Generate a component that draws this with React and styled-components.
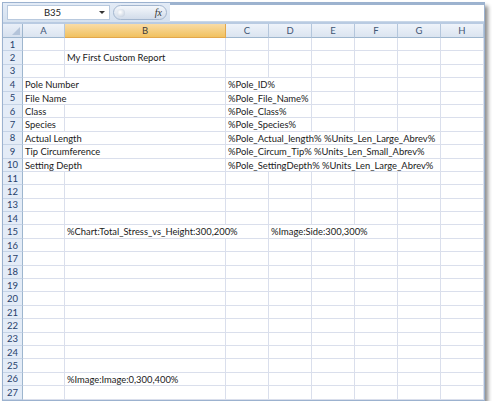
import React from 'react';
import styled, { createGlobalStyle } from 'styled-components';

const GlobalStyle = createGlobalStyle`
  html, body { margin: 0; padding: 0; background: #ffffff; }
  body { font-family: Lato, "Open Sans", sans-serif; }
`;

const Window = styled.div`
  width: 481px;
  margin: 2px 0 0 2px;
  border: 1px solid #9cb2cf;
  background: #ffffff;
  box-shadow: 3px 4px 4px rgba(0, 0, 0, 0.45);
  display: flex;
  flex-direction: column;
`;

const FormulaBar = styled.div`
  height: 19px;
  display: flex;
  align-items: center;
  gap: 3px;
  padding: 0 0 0 4px;
  background: linear-gradient(#e3ebf6, #d5e1ef);
  border-bottom: 2px solid #b9cbe2;
`;

const NameBox = styled.div`
  position: relative;
  width: 103px;
  height: 15px;
  box-sizing: border-box;
  background: #ffffff;
  border: 1px solid #b8c9de;
  display: flex;
  align-items: center;
  justify-content: center;
  font-size: 9.5px;
  color: #222;
  padding-right: 12px;
`;

const Arrow = styled.span`
  position: absolute;
  right: 4px;
  top: 5px;
  width: 0;
  height: 0;
  border-left: 3px solid transparent;
  border-right: 3px solid transparent;
  border-top: 3px solid #333;
`;

const FxPill = styled.div`
  width: 54px;
  height: 15px;
  box-sizing: border-box;
  border-radius: 8px;
  border: 1px solid #a3b6cf;
  background: linear-gradient(#f4f7fb, #d2dcea);
  display: flex;
  align-items: center;
  justify-content: space-between;
  padding: 0 4px 0 3px;
`;

const Knob = styled.span`
  width: 8px;
  height: 8px;
  border-radius: 50%;
  background: radial-gradient(circle at 40% 40%, #ffffff, #b9c6d8);
`;

const Fx = styled.span`
  font-family: "Liberation Serif", serif;
  font-style: italic;
  font-size: 10px;
  color: #333;
`;

const FormulaInput = styled.div`
  flex: 1;
  height: 16px;
  background: #ffffff;
  border-top: 2px solid #9db3cf;
  border-bottom: 1px solid #c9d7e8;
`;

const Sheet = styled.div`
  display: grid;
  grid-template-columns: 20px 42px 161px repeat(6, 43px);
  grid-template-rows: 14px;
  grid-auto-rows: 13.4px;
  font-size: 9.4px;
  color: #1a1a1a;
`;

const Corner = styled.div`
  position: relative;
  background: linear-gradient(#e9eff8, #d6e0ee);
  border-right: 1px solid #9eb6ce;
  border-bottom: 1px solid #9eb6ce;
  &::after {
    content: '';
    position: absolute;
    right: 2px;
    bottom: 2px;
    border-left: 8px solid transparent;
    border-bottom: 8px solid #b4c4da;
  }
`;

const ColHead = styled.div`
  display: flex;
  align-items: center;
  justify-content: center;
  background: ${p => (p.$active ? 'linear-gradient(#f9dca6, #f1c15f)' : 'linear-gradient(#eef3fa, #dbe4f0)')};
  border-right: 1px solid ${p => (p.$active ? '#e2a74c' : '#b4c6dc')};
  border-bottom: 1px solid ${p => (p.$active ? '#e2a74c' : '#9eb6ce')};
  color: ${p => (p.$active ? '#3a3a3a' : '#3f5574')};
  font-size: 9.5px;
`;

const RowHead = styled.div`
  display: flex;
  align-items: center;
  justify-content: center;
  background: #e4ecf7;
  border-right: 1px solid #9eb6ce;
  border-bottom: 1px solid #c5d3e6;
  color: #27416b;
  font-size: 9.5px;
`;

const Cell = styled.div`
  grid-column: span ${p => p.$span || 1};
  border-right: 1px solid #dadfec;
  border-bottom: 1px solid #dadfec;
  padding-left: 2px;
  white-space: nowrap;
  overflow: visible;
  line-height: 13.4px;
  box-sizing: border-box;
`;

const COLS = ['A', 'B', 'C', 'D', 'E', 'F', 'G', 'H'];

const CONTENT = {
  2: [{ c: 1, text: 'My First Custom Report' }],
  4: [{ c: 0, span: 2, text: 'Pole Number' }, { c: 2, span: 2, text: '%Pole_ID%' }],
  5: [{ c: 0, span: 2, text: 'File Name' }, { c: 2, span: 2, text: '%Pole_File_Name%' }],
  6: [{ c: 0, text: 'Class' }, { c: 2, span: 2, text: '%Pole_Class%' }],
  7: [{ c: 0, text: 'Species' }, { c: 2, span: 2, text: '%Pole_Species%' }],
  8: [{ c: 0, span: 2, text: 'Actual Length' }, { c: 2, span: 5, text: '%Pole_Actual_length% %Units_Len_Large_Abrev%' }],
  9: [{ c: 0, span: 2, text: 'Tip Circumference' }, { c: 2, span: 5, text: '%Pole_Circum_Tip% %Units_Len_Small_Abrev%' }],
  10: [{ c: 0, span: 2, text: 'Setting Depth' }, { c: 2, span: 5, text: '%Pole_SettingDepth% %Units_Len_Large_Abrev%' }],
  15: [{ c: 1, span: 2, text: '%Chart:Total_Stress_vs_Height:300,200%' }, { c: 3, span: 3, text: '%Image:Side:300,300%' }],
  26: [{ c: 1, text: '%Image:Image:0,300,400%' }],
};

function buildRow(r) {
  const items = CONTENT[r] || [];
  const cells = [];
  let c = 0;
  while (c < COLS.length) {
    const it = items.find(i => i.c === c);
    if (it) {
      cells.push(<Cell key={c} $span={it.span}>{it.text}</Cell>);
      c += it.span || 1;
    } else {
      cells.push(<Cell key={c} />);
      c += 1;
    }
  }
  return cells;
}

export default function App() {
  const rows = Array.from({ length: 27 }, (_, i) => i + 1);
  return (
    <>
      <GlobalStyle />
      <Window>
        <FormulaBar>
          <NameBox>
            B35
            <Arrow />
          </NameBox>
          <FxPill>
            <Knob />
            <Fx>fx</Fx>
          </FxPill>
          <FormulaInput />
        </FormulaBar>
        <Sheet>
          <Corner />
          {COLS.map(c => (
            <ColHead key={c} $active={c === 'B'}>{c}</ColHead>
          ))}
          {rows.map(r => (
            <React.Fragment key={r}>
              <RowHead>{r}</RowHead>
              {buildRow(r)}
            </React.Fragment>
          ))}
        </Sheet>
      </Window>
    </>
  );
}
